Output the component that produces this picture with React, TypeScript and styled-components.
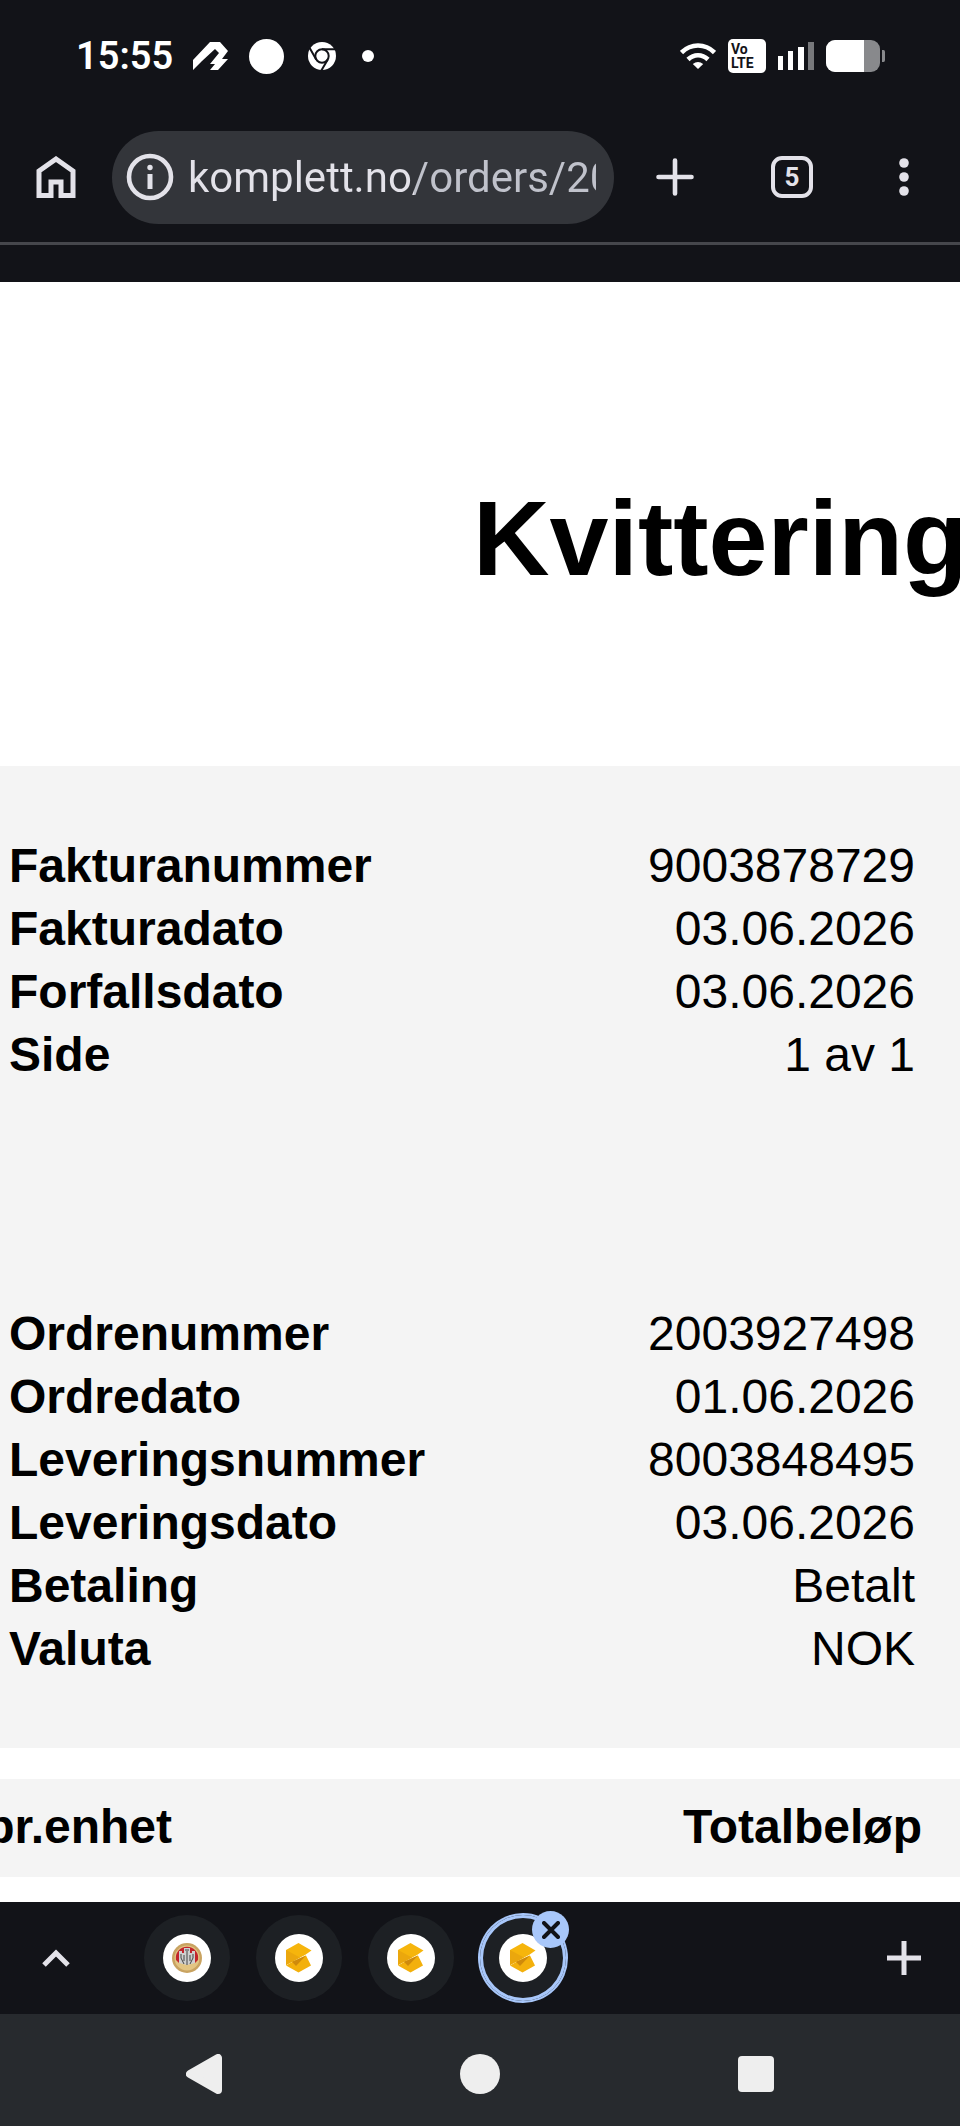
import { createGlobalStyle, styled } from "styled-components";

const GlobalStyle = createGlobalStyle`
  * {
    box-sizing: border-box;
  }
  body {
    margin: 0;
    background-color: #121318;
  }
  button {
    display: flex;
    align-items: center;
    justify-content: center;
    padding: 0;
    border: 0;
    background: none;
    font: inherit;
    color: inherit;
    cursor: pointer;
  }
  svg {
    display: block;
    flex: none;
  }
`;

const Screen = styled.div`
  display: flex;
  flex-direction: column;
  min-height: 100vh;
  overflow: hidden;
  font-family: Roboto, "Liberation Sans", sans-serif;
  color: #e3e2e9;
`;

const StatusBar = styled.header`
  display: flex;
  align-items: center;
  justify-content: space-between;
  height: 112px;
  padding: 0 74px 0 76px;
  color: #fff;
`;
const StatusGroup = styled.div<{ $gap: number }>`
  display: flex;
  align-items: center;
  gap: ${({ $gap }) => $gap}px;
`;
const Clock = styled.time`
  font-size: 38px;
  line-height: 40px;
  font-weight: 600;
`;
const VolteBadge = styled.span`
  width: 38px;
  height: 34px;
  padding: 3px;
  border-radius: 5px;
  background-color: #fff;
  color: #121318;
  font-size: 14px;
  line-height: 14px;
  font-weight: 700;
`;

const Toolbar = styled.nav`
  display: flex;
  align-items: center;
  height: 130px;
`;
const ToolButton = styled.button<{ $width: number }>`
  flex: none;
  width: ${({ $width }) => $width}px;
  height: 112px;
`;
const AddressBar = styled.div`
  display: flex;
  align-items: center;
  flex: 1;
  min-width: 0;
  height: 93px;
  padding: 0 18px 0 14px;
  gap: 14px;
  border-radius: 47px;
  background-color: #33353a;
`;
const AddressInput = styled.input`
  flex: 1;
  min-width: 0;
  height: 60px;
  padding: 0;
  border: 0;
  outline: 0;
  font-family: inherit;
  font-size: 42px;
  background-image: linear-gradient(to right, #e3e2e9 226px, #c0c2cb 226px);
  background-clip: text;
  color: transparent;
`;
const TabCount = styled.span`
  display: flex;
  align-items: center;
  justify-content: center;
  width: 42px;
  height: 42px;
  border: 4px solid #e3e2e9;
  border-radius: 11px;
  font-size: 26px;
  line-height: 26px;
  font-weight: 700;
`;
const PageTop = styled.div`
  height: 40px;
  border-top: 3px solid #46474c;
`;

const Receipt = styled.main`
  flex: 1;
  background-color: #fff;
  color: #000;
  font-family: "Liberation Sans", Arial, sans-serif;
  font-size: 48px;
  line-height: 63px;
`;
const Title = styled.h1`
  margin: 0;
  padding: 196px 0 168px 473px;
  font-size: 106px;
  line-height: 120px;
  white-space: nowrap;
`;
const Panel = styled.section`
  display: flex;
  flex-direction: column;
  gap: 216px;
  padding: 68px 45px 68px 9px;
  background-color: #f4f4f4;
`;
const InfoTable = styled.table`
  width: 100%;
  border-collapse: collapse;
  th,
  td {
    padding: 0;
  }
  th {
    text-align: left;
  }
  td {
    text-align: right;
  }
`;
const LineTable = styled.table`
  width: 100%;
  margin: 31px 0 25px;
  border-collapse: collapse;
  background-color: #f4f4f4;
`;
const LineHead = styled.th`
  height: 98px;
  padding: 0 38px 3px 0;
  text-align: right;
`;
// first column runs off the left edge of the zoomed page
const CutHead = styled.th`
  width: 172px;
  height: 98px;
  padding: 0 0 3px;
  div {
    display: flex;
    justify-content: flex-end;
    width: 172px;
  }
`;

const TabStrip = styled.nav`
  display: flex;
  align-items: center;
  height: 112px;
`;
const Tabs = styled.div`
  display: flex;
  flex: 1;
  gap: 26px;
  padding-left: 32px;
`;
const TabItem = styled.div`
  position: relative;
`;
const Tab = styled.button<{ $active?: boolean }>`
  width: 86px;
  height: 86px;
  border-radius: 50%;
  background-color: #1d2024;
  box-shadow: ${({ $active }) => ($active ? "0 0 0 2px #a8c7fa, inset 0 0 0 3px #a8c7fa" : "none")};
`;
const Favicon = styled.span`
  display: flex;
  align-items: center;
  justify-content: center;
  width: 48px;
  height: 48px;
  border-radius: 50%;
  background-color: #fff;
`;
const CloseTab = styled.button`
  position: absolute;
  top: -4px;
  right: -3px;
  width: 37px;
  height: 37px;
  border-radius: 50%;
  background-color: #a8c7fa;
`;

const SystemNav = styled.nav`
  display: flex;
  align-items: center;
  justify-content: center;
  gap: 164px;
  height: 112px;
  padding-top: 8px;
  background-color: #272a2e;
`;
const SystemButton = styled.button`
  width: 112px;
  height: 104px;
`;

const invoiceRows = [
  ["Fakturanummer", "9003878729"],
  ["Fakturadato", "03.06.2026"],
  ["Forfallsdato", "03.06.2026"],
  ["Side", "1 av 1"],
];

const orderRows = [
  ["Ordrenummer", "2003927498"],
  ["Ordredato", "01.06.2026"],
  ["Leveringsnummer", "8003848495"],
  ["Leveringsdato", "03.06.2026"],
  ["Betaling", "Betalt"],
  ["Valuta", "NOK"],
];

const Info = ({ rows }: { rows: string[][] }) => (
  <InfoTable>
    <tbody>
      {rows.map(([label, value]) => (
        <tr key={label}>
          <th scope="row">{label}</th>
          <td>{value}</td>
        </tr>
      ))}
    </tbody>
  </InfoTable>
);

const ArrowIcon = () => (
  <svg width="36" height="28" viewBox="0 0 36 28" fill="#fff">
    <path d="M0 18 17 0H27L35 9 29 17H35L25 28H17L22 22H17L26 11 22 7 9 19 0 28Z" />
  </svg>
);

const ChromeIcon = () => (
  <svg width="36" height="28" viewBox="0 0 36 28">
    <circle cx="18" cy="14" r="14" fill="#fff" />
    <circle cx="18" cy="14" r="6.7" fill="none" stroke="#121318" strokeWidth="2" />
    <path d="M18 7.3H31M12.2 17.4 5.7 6M23.8 17.4 17.3 28.6" stroke="#121318" strokeWidth="2" />
  </svg>
);

const WifiIcon = () => (
  <svg width="36" height="26" viewBox="0 0 36 26" fill="none" stroke="#fff" strokeWidth="4.6">
    <path d="M1.5 9.5C11 .2 25 .2 34.5 9.5M8 16.5C14 10.8 22 10.8 28 16.5" />
    <path d="M18 26 12.8 21Q18 17 23.2 21Z" fill="#fff" stroke="none" />
  </svg>
);

const SignalIcon = () => (
  <svg width="36" height="28" viewBox="0 0 36 28" fill="#fff">
    <path d="M0 14H5V28H0ZM10 9H15V28H10ZM20 5H26V28H20Z" />
    <path d="M30 0H36V28H30Z" fill="#77787b" />
  </svg>
);

const BatteryIcon = () => (
  <svg width="60" height="32" viewBox="0 0 60 32">
    <rect width="54" height="32" rx="9" fill="#88898c" />
    <path d="M9 0H38V32H9A9 9 0 0 1 0 23V9A9 9 0 0 1 9 0Z" fill="#fff" />
    <path d="M56 10H57.5Q59 10 59 12V20Q59 22 57.5 22H56Z" fill="#88898c" />
  </svg>
);

const BoxIcon = () => (
  <svg width="26" height="30" viewBox="0 0 26 30">
    <path d="M0 7 12.5 0 25.5 7.5 19 12 0 22Z" fill="#f6b50c" />
    <path d="M0 7 14 14.5 0 22Z" fill="#eba70d" />
    <path d="M7 18.5 20 12.5 25 22.5 12.5 29.5 0 22.5Z" fill="#f3b00c" />
    <path d="M6 18.8 20 12.5 10 23Z" fill="#cf8a0b" />
  </svg>
);

const CrestIcon = () => (
  <svg width="30" height="30" viewBox="0 0 30 30">
    <circle cx="15" cy="15" r="15" fill="#c9a361" />
    <circle cx="15" cy="15" r="12.5" fill="#e3c583" />
    <path d="M4 17A11.2 11.2 0 1 1 26 17L23 20H7Z" fill="#c2252d" />
    <path d="M7 8H10V10H12V5H18V10H20V8H23V20L15 22 7 20Z" fill="#cfcfcf" />
    <path d="M9 11V15L12 21M15 8V22M21 11V15L18 21M12 12V18M18 12V18M13 7H17" stroke="#444" fill="none" />
  </svg>
);

const App = () => (
  <>
    <GlobalStyle />
    <Screen>
      <StatusBar>
        <StatusGroup $gap={20}>
          <Clock>15:55</Clock>
          <ArrowIcon />
          <svg width="35" height="35" viewBox="0 0 35 35">
            <circle cx="17.5" cy="17.5" r="17.5" fill="#fff" />
          </svg>
          <ChromeIcon />
          <svg width="16" height="12" viewBox="0 0 16 12">
            <circle cx="8" cy="6" r="6" fill="#fff" />
          </svg>
        </StatusGroup>
        <StatusGroup $gap={12}>
          <WifiIcon />
          <VolteBadge>
            Vo
            <br />
            LTE
          </VolteBadge>
          <SignalIcon />
          <BatteryIcon />
        </StatusGroup>
      </StatusBar>

      <Toolbar>
        <ToolButton $width={112} aria-label="Hjem">
          <svg width="40" height="42" viewBox="0 0 40 42" fill="none" stroke="#e3e2e9" strokeWidth="5">
            <path d="M3 39.5V15L20 3 37 15V39.5H25V26H15V39.5Z" />
          </svg>
        </ToolButton>
        <AddressBar>
          <svg width="48" height="48" viewBox="0 0 48 48">
            <circle cx="24" cy="24" r="21" fill="none" stroke="#e3e2e9" strokeWidth="4.6" />
            <circle cx="24" cy="14.5" r="2.7" fill="#e3e2e9" />
            <path d="M21.5 21H26.5V36H21.5Z" fill="#e3e2e9" />
          </svg>
          <AddressInput aria-label="Nettadresse" defaultValue="komplett.no/orders/20" />
        </AddressBar>
        <ToolButton $width={122} aria-label="Ny fane">
          <svg width="38" height="38" viewBox="0 0 38 38" stroke="#e3e2e9" strokeWidth="4.6" strokeLinecap="round">
            <path d="M19 2.5V35.5M2.5 19H35.5" />
          </svg>
        </ToolButton>
        <ToolButton $width={112} aria-label="Faner">
          <TabCount>5</TabCount>
        </ToolButton>
        <ToolButton $width={112} aria-label="Meny">
          <svg width="10" height="38" viewBox="0 0 10 38" fill="#e3e2e9">
            <circle cx="5" cy="5" r="4.8" />
            <circle cx="5" cy="19" r="4.8" />
            <circle cx="5" cy="33" r="4.8" />
          </svg>
        </ToolButton>
      </Toolbar>
      <PageTop />

      <Receipt>
        <Title>Kvittering</Title>
        <Panel>
          <Info rows={invoiceRows} />
          <Info rows={orderRows} />
        </Panel>
        <LineTable>
          <thead>
            <tr>
              <CutHead scope="col">
                <div>pr.enhet</div>
              </CutHead>
              <LineHead scope="col">Totalbeløp</LineHead>
            </tr>
          </thead>
        </LineTable>
      </Receipt>

      <TabStrip>
        <ToolButton $width={112} aria-label="Vis faner">
          <svg width="28" height="18" viewBox="0 0 28 18" fill="none" stroke="#e3e2e9" strokeWidth="5">
            <path d="M2 16 14 4 26 16" />
          </svg>
        </ToolButton>
        <Tabs>
          <TabItem>
            <Tab aria-label="Fane 1">
              <Favicon>
                <CrestIcon />
              </Favicon>
            </Tab>
          </TabItem>
          <TabItem>
            <Tab aria-label="Fane 2">
              <Favicon>
                <BoxIcon />
              </Favicon>
            </Tab>
          </TabItem>
          <TabItem>
            <Tab aria-label="Fane 3">
              <Favicon>
                <BoxIcon />
              </Favicon>
            </Tab>
          </TabItem>
          <TabItem>
            <Tab $active aria-label="Fane 4">
              <Favicon>
                <BoxIcon />
              </Favicon>
            </Tab>
            <CloseTab aria-label="Lukk fane">
              <svg width="18" height="18" viewBox="0 0 18 18" stroke="#121318" strokeWidth="4" strokeLinecap="round">
                <path d="M2 2 16 16M16 2 2 16" />
              </svg>
            </CloseTab>
          </TabItem>
        </Tabs>
        <ToolButton $width={112} aria-label="Ny fane">
          <svg width="34" height="34" viewBox="0 0 34 34" stroke="#e3e2e9" strokeWidth="5">
            <path d="M17 0V34M0 17H34" />
          </svg>
        </ToolButton>
      </TabStrip>

      <SystemNav>
        <SystemButton aria-label="Tilbake">
          <svg width="36" height="40" viewBox="0 0 36 40">
            <path d="M4 20 32 4V36Z" fill="#eee" stroke="#eee" strokeWidth="8" strokeLinejoin="round" />
          </svg>
        </SystemButton>
        <SystemButton aria-label="Startskjerm">
          <svg width="40" height="40" viewBox="0 0 40 40">
            <circle cx="20" cy="20" r="20" fill="#eee" />
          </svg>
        </SystemButton>
        <SystemButton aria-label="Siste apper">
          <svg width="36" height="36" viewBox="0 0 36 36">
            <rect width="36" height="36" rx="4" fill="#eee" />
          </svg>
        </SystemButton>
      </SystemNav>
    </Screen>
  </>
);

export default App;
